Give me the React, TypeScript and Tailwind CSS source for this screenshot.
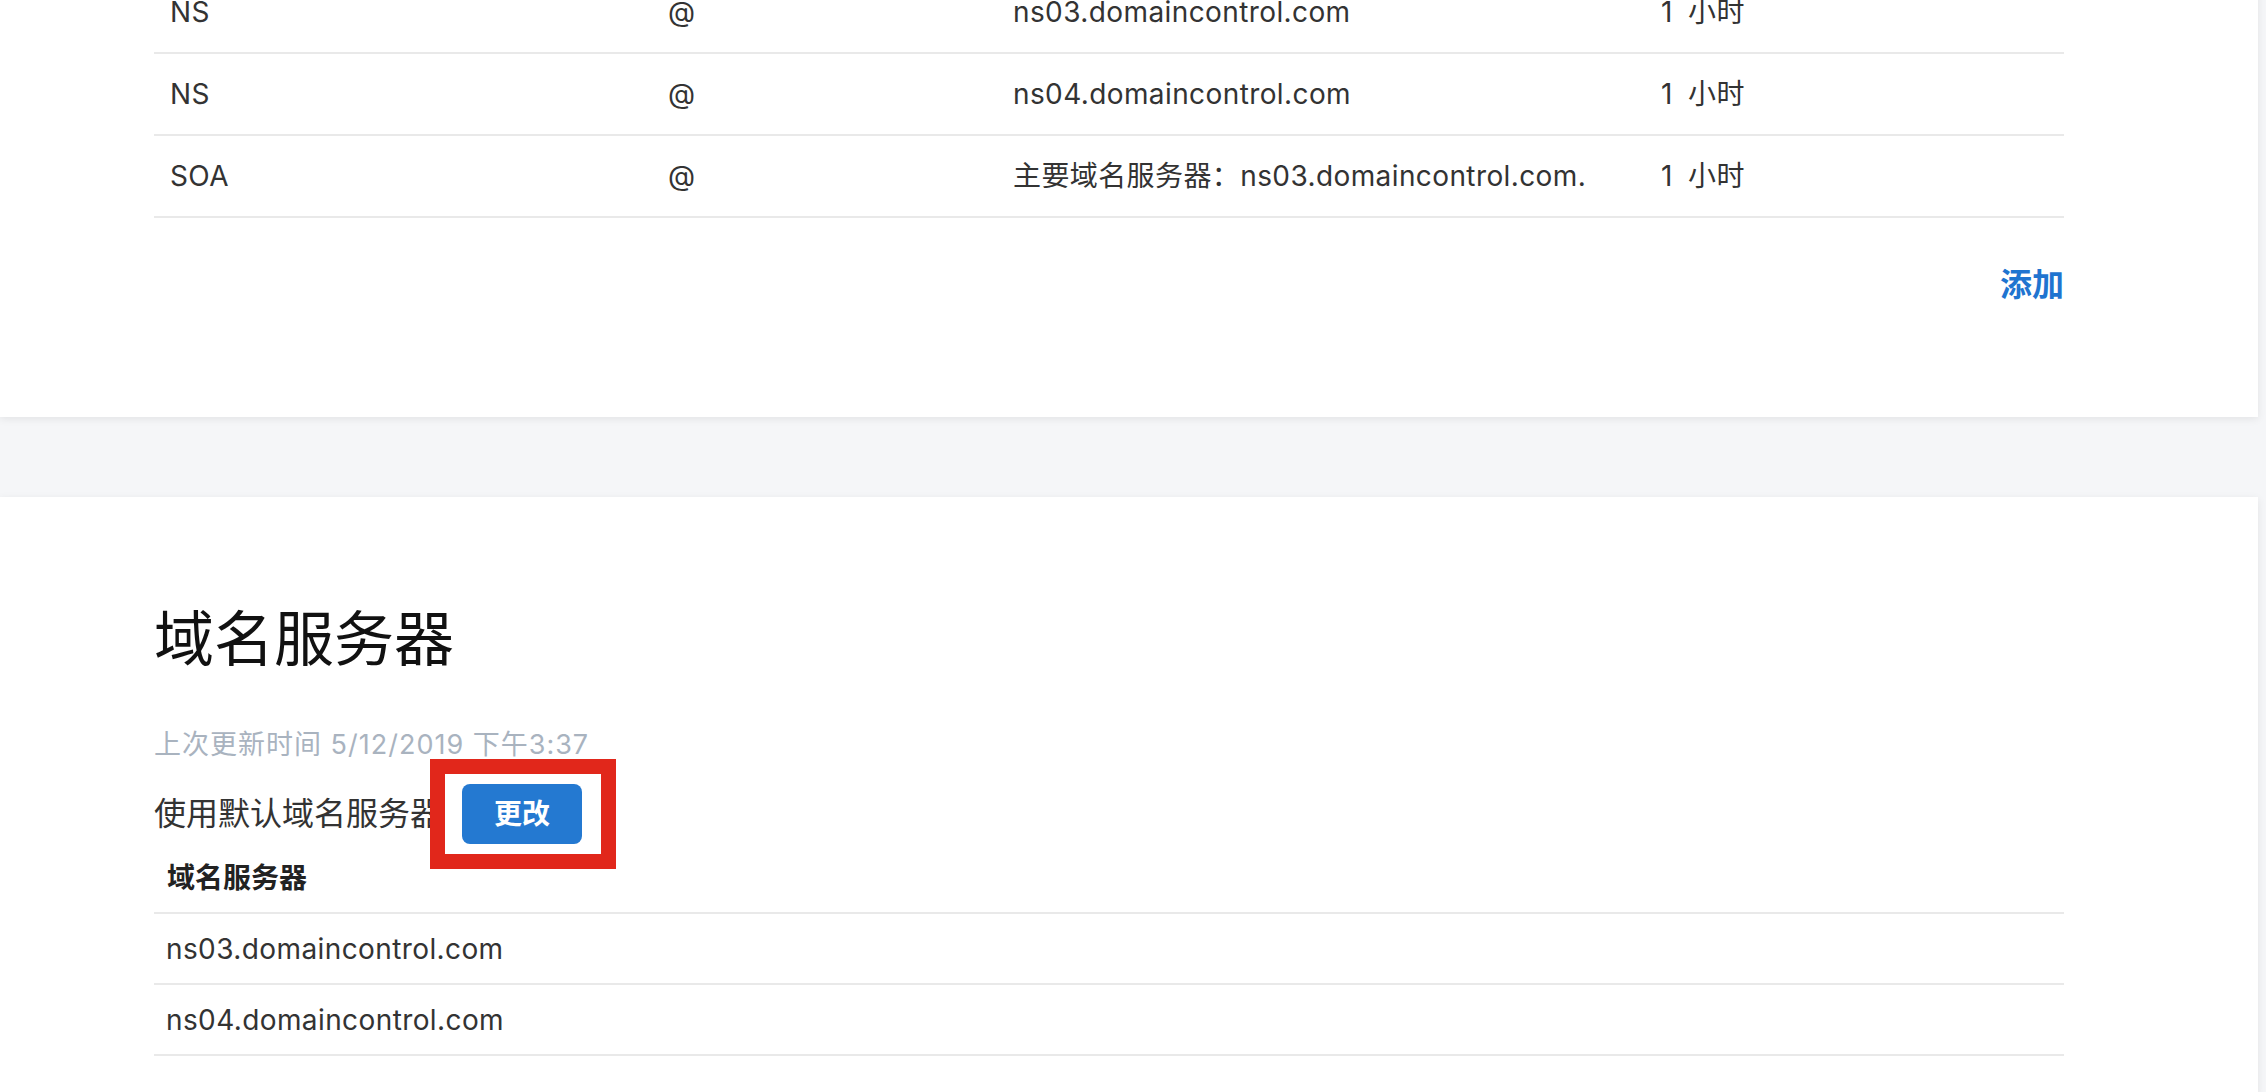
import React from "react";

const records = [
  { type: "NS", name: "@", value: "ns03.domaincontrol.com", ttl: "1 小时" },
  { type: "NS", name: "@", value: "ns04.domaincontrol.com", ttl: "1 小时" },
  {
    type: "SOA",
    name: "@",
    value: "主要域名服务器：ns03.domaincontrol.com.",
    ttl: "1 小时",
  },
];

const nameservers = ["ns03.domaincontrol.com", "ns04.domaincontrol.com"];

function RecordRow({
  type,
  name,
  value,
  ttl,
}: {
  type: string;
  name: string;
  value: string;
  ttl: string;
}) {
  return (
    <div className="flex h-[82px] items-center border-b-2 border-[#e9e9e9] text-[28px] tracking-[0.4px] text-[#333]">
      <div className="w-[498px] pl-4">{type}</div>
      <div className="w-[345px] pl-4">{name}</div>
      <div className="w-[648px] pl-4">{value}</div>
      <div className="flex-1 pl-4 [word-spacing:7px]">{ttl}</div>
    </div>
  );
}

export default function App() {
  return (
    <div
      className="min-h-screen overflow-hidden bg-[#f5f6f8]"
      style={{ fontFamily: "Inter, 'Noto Sans CJK SC', sans-serif" }}
    >
      {/* DNS records card, scrolled so only the last rows show */}
      <div className="-mt-[28px] mr-2 bg-white pl-[154px] pr-[194px] pb-[112px] shadow-[0_2px_8px_rgba(0,0,0,0.08)]">
        {records.map((r, i) => (
          <RecordRow key={i} {...r} />
        ))}
        <div className="mt-[47px] flex justify-end">
          <button className="text-[32px] leading-[40px] font-bold text-[#1f74d0]">
            添加
          </button>
        </div>
      </div>

      {/* Nameserver card */}
      <div className="mt-[80px] mr-2 bg-white pl-[154px] pr-[194px] pt-[112px] pb-10 shadow-[0_2px_8px_rgba(0,0,0,0.08)]">
        <h2 className="text-[60px] leading-none font-normal text-[#111]">
          域名服务器
        </h2>
        <div className="mt-[56px] text-[27px] leading-[40px] tracking-[1px] text-[#a9b3bf]">
          上次更新时间 5/12/2019 下午3:37
        </div>
        <div className="mt-[19px] flex h-[60px] items-center">
          <span className="text-[32px] leading-[40px] text-[#333]">
            使用默认域名服务器
          </span>
          <div className="relative ml-5">
            <div className="absolute -top-[25px] -bottom-[25px] -left-[32px] -right-[34px] z-10 border-[15px] border-[#e1271b] bg-white" />
            <button className="relative z-20 h-[60px] w-[120px] rounded-[8px] bg-[#2479d1] text-[28px] font-bold text-white">
              更改
            </button>
          </div>
        </div>
        <div className="flex h-[70px] items-center border-b-2 border-[#e9e9e9] pl-[13px] text-[28px] font-bold text-[#222]">
          域名服务器
        </div>
        {nameservers.map((ns) => (
          <div
            key={ns}
            className="flex h-[71px] items-center border-b-2 border-[#e9e9e9] pl-3 text-[28px] tracking-[0.4px] text-[#333]"
          >
            {ns}
          </div>
        ))}
      </div>
    </div>
  );
}
